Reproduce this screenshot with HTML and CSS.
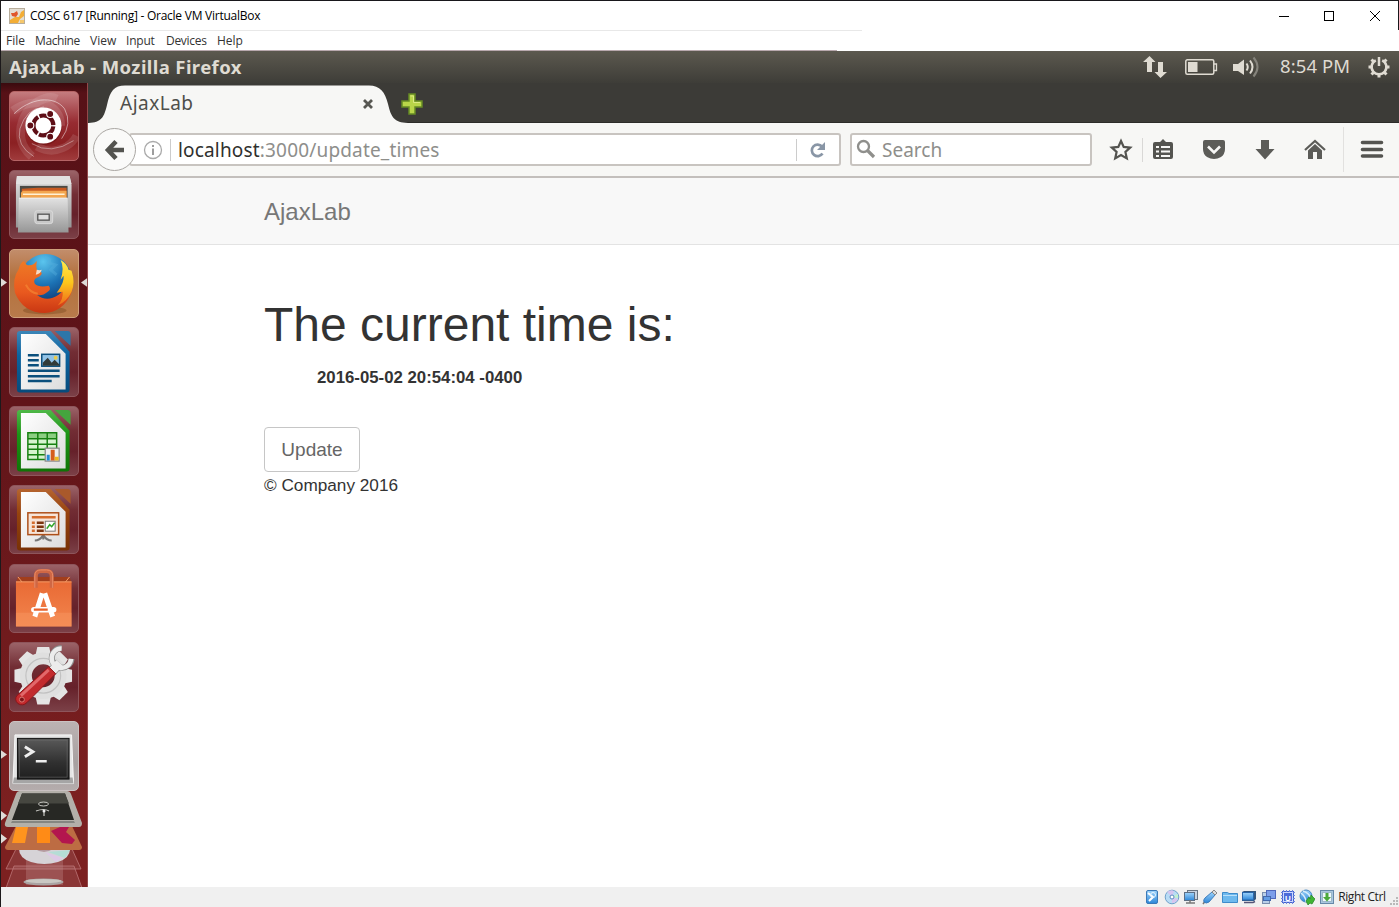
FILE: index.html
```html
<!DOCTYPE html>
<html lang="en">
<head>
<meta charset="utf-8">
<title>AjaxLab</title>
<link rel="stylesheet" href="styles.css">
</head>
<body>
<svg class="defs" width="0" height="0">
  <defs>
    <linearGradient id="doc" x1="0" y1="0" x2="1" y2="1"><stop offset="0" stop-color="#fff"/><stop offset="1" stop-color="#dcdcdc"/></linearGradient>
    <linearGradient id="metal" x1="0" y1="0" x2="0" y2="1"><stop offset="0" stop-color="#e2e2e2"/><stop offset="1" stop-color="#969696"/></linearGradient>
    <linearGradient id="orange" x1="0" y1="0" x2="0" y2="1"><stop offset="0" stop-color="#e96a35"/><stop offset="1" stop-color="#f2854d"/></linearGradient>
    <linearGradient id="dark" x1="0" y1="0" x2="0" y2="1"><stop offset="0" stop-color="#5a5a5a"/><stop offset=".6" stop-color="#303030"/><stop offset="1" stop-color="#1f1f1f"/></linearGradient>
    <linearGradient id="fox" x1="0" y1="0" x2="0" y2="1"><stop offset="0" stop-color="#ee7a25"/><stop offset=".6" stop-color="#e9591f"/><stop offset="1" stop-color="#c93713"/></linearGradient>
    <linearGradient id="flame" x1="0" y1="0" x2="0" y2="1"><stop offset="0" stop-color="#ffe94a"/><stop offset=".5" stop-color="#fcc51c"/><stop offset="1" stop-color="#ee6a1c"/></linearGradient>
    <radialGradient id="globe" cx=".45" cy=".15" r=".9"><stop offset="0" stop-color="#5bc5ee"/><stop offset=".5" stop-color="#1c72b4"/><stop offset="1" stop-color="#0b2c66"/></radialGradient>
    <linearGradient id="blue" x1="0" y1="0" x2="0" y2="1"><stop offset="0" stop-color="#9fd4fb"/><stop offset="1" stop-color="#2c86d8"/></linearGradient>
    <linearGradient id="wblue" x1="0" y1="0" x2="0" y2="1"><stop offset="0" stop-color="#3c86b8"/><stop offset=".4" stop-color="#0b639f"/><stop offset="1" stop-color="#064b7c"/></linearGradient>
    <linearGradient id="cgreen" x1="0" y1="0" x2="0" y2="1"><stop offset="0" stop-color="#4fb848"/><stop offset=".4" stop-color="#1c9416"/><stop offset="1" stop-color="#0f7406"/></linearGradient>
    <linearGradient id="ibrown" x1="0" y1="0" x2="0" y2="1"><stop offset="0" stop-color="#b5642f"/><stop offset=".4" stop-color="#96430e"/><stop offset="1" stop-color="#783106"/></linearGradient>
  </defs>
</svg>
<div class="window">
  <header class="titlebar">
    <svg class="vb-icon" width="16" height="16" viewBox="0 0 16 16"><rect x=".5" y=".5" width="15" height="15" fill="#e3ded4" stroke="#b8ad9b"/><path d="M1 15V12L6 9L10 9L12 4L15 2V8L11 11L9 15Z" fill="#f3ad35"/><path d="M2 5 L5 5 L8 3 L9 6 L7 9 L3 8Z" fill="#e0562b"/><path d="M11 12h4v3h-4z" fill="#f5c76b"/></svg>
    <span class="win-title">COSC 617 [Running] - Oracle VM VirtualBox</span>
    <svg class="win-controls" width="104" height="12" viewBox="0 0 104 12" fill="none" stroke="#000" stroke-width="1"><path d="M1 6.500h10"/><rect x="46.500" y="1.500" width="9" height="9"/><path d="M92 1l10 10M102 1L92 11"/></svg>
  </header>
  <nav class="menubar"><span class="m1">File</span><span class="m2">Machine</span><span class="m3">View</span><span class="m4">Input</span><span class="m5">Devices</span><span class="m6">Help</span></nav>

  <div class="panel">
    <span class="panel-title">AjaxLab - Mozilla Firefox</span>
    <div class="indicators">
      <svg width="24" height="24" viewBox="0 0 24 24" fill="#dfdbd2"><path d="M6.500 1l6 6H9v10H4V7H0z"/><path d="M17.500 23l-6-6H15V7h5v10h4z"/></svg>
      <svg class="battery" width="34" height="20" viewBox="0 0 34 20"><rect x="1.800" y="2.800" width="28" height="14.500" rx="1.500" fill="none" stroke="#dfdbd2" stroke-width="1.500"/><rect x="4" y="5" width="9.500" height="10" fill="#dfdbd2"/><path d="M30 7h2.500v6.500H30" fill="none" stroke="#dfdbd2" stroke-width="1.300"/></svg>
      <svg class="sound" width="28" height="24" viewBox="0 0 28 24" fill="none" stroke="#dfdbd2" stroke-width="2"><path d="M1 9h5l6-4.500v15.500L6 16H1z" fill="#dfdbd2" stroke="none"/><path d="M14.500 8.500q2.500 3.500 0 7"/><path d="M18 5.500q5 6.500 0 13"/><path d="M21.500 2.500q8 9.500 0 19" stroke="#85837b"/></svg>
      <span class="clock">8:54 PM</span>
      <svg width="24" height="24" viewBox="0 0 24 24" fill="none" stroke="#dfdbd2"><path d="M8.800 5.300a7.400 7.400 0 1 0 6.400 0" stroke-width="2.500"/><path d="M12 2v9" stroke-width="2.500"/><path d="M1.500 12H5M19 12h3.500M4.500 4.500l2.700 2.700M19.500 4.500l-2.700 2.700M4.500 19.500l2.700-2.700M19.500 19.500l-2.700-2.700M12 19v3.500" stroke-width="3"/></svg>
    </div>
  </div>

  <div class="desktop">
    <aside class="launcher">
      <div class="item"><i></i><div class="tile dash"><svg viewBox="0 0 70 70"><g fill="none" stroke="#fff"><path d="M4 20C25 5 52 12 52 35" stroke-width="9" opacity=".12"/><path d="M5 23C20 8 45 3 56 18Q64 33 53 48" stroke-width="1" opacity=".5"/><path d="M48 8C34 1 8 21 12 48Q14 58 23 66" stroke-width="9" opacity=".11"/><path d="M25 66Q7 55 11 38Q17 18 35 16" opacity=".4"/><path d="M28 56C48 67 64 53 68 45" stroke-width="8" opacity=".12"/><path d="M23 53Q42 65 65 50" opacity=".4"/></g><circle cx="35" cy="36" r="18.500" fill="#400" opacity=".25"/><circle cx="34.700" cy="34.700" r="18.200" fill="#fff"/><circle cx="34.700" cy="34.700" r="10" fill="none" stroke="#5e0e16" stroke-width="4.200" stroke-dasharray="19.300 1.600" stroke-dashoffset="-1"/><g fill="#5e0e16" stroke="#fff" stroke-width="1.100"><circle cx="21.500" cy="34.700" r="3.500"/><circle cx="41.500" cy="23.200" r="3.500"/><circle cx="41.500" cy="46" r="3.500"/></g></svg></div><i></i></div>
      <div class="item"><i></i><div class="tile"><svg viewBox="0 0 70 70"><path d="M8 6h53l2 9v43H7V15z" fill="url(#metal)"/><path d="M8 6h53l2 8H7z" fill="#e2e2e2"/><rect x="11" y="16" width="48" height="13" fill="#4b4b46"/><path d="M13 19l16-1h29v13H12z" fill="#c85a21"/><path d="M12 23l2-2h44v10H12z" fill="#f3a64f"/><path d="M14 24.500h42" stroke="#fff1d5" stroke-width="1.500"/><path d="M10 28h49l1 35H9z" fill="url(#metal)"/><path d="M10 28.500h49" stroke="#ededed"/><rect x="26" y="41" width="18" height="13" rx="2.500" fill="#c8c8c8" stroke="#dadada"/><rect x="29" y="44.500" width="11.500" height="6" fill="#dedede" stroke="#515151" stroke-width="1.300"/></svg></div><i></i></div>
      <div class="item"><svg class="arrow" viewBox="0 0 7 12"><path d="M0 1l7 5-7 5z"/></svg><div class="tile active"><svg viewBox="0 0 70 70"><ellipse cx="36" cy="62" rx="22" ry="4" fill="#64350e" opacity=".3"/><circle cx="37" cy="31" r="26" fill="url(#globe)"/><path d="M36 8q7 2 4 6l7 2-5 5 6 5" fill="none" stroke="#5ab2df" stroke-width="3" opacity=".35"/><path d="M10 20Q11 14 15 12L18 16Q22 17 25 15L28 12Q27 17 28 21L33 24Q33 27 28 29Q24 31 26 35Q30 39 40 37Q43 41 39 43Q33 48 28 46Q38 54 50 46Q60 39 57 20Q68 32 62 46Q54 63 36 64.500Q14 64 6 44Q3 30 10 20Z" fill="url(#fox)"/><path d="M52 11Q59 15 60 21L63 22Q67 34 63 43Q59 52 49 57Q55 50 54 43L48 44Q56 34 55 27L52 31Q56 19 52 11Z" fill="url(#flame)"/><path d="M28 21q3 1 5 0-1 4-6 5z" fill="#f6dac3"/><path d="M17 36q4 8 12 9" fill="none" stroke="#f68c36" stroke-width="2" opacity=".6"/></svg></div><svg class="arrow right" viewBox="0 0 7 12"><path d="M7 1L0 6l7 5z"/></svg></div>
      <div class="item"><i></i><div class="tile"><svg viewBox="0 0 70 70"><path d="M11 4h31l19 21v38q0 3-3 3H11q-3 0-3-3V7q0-3 3-3z" fill="url(#wblue)"/><path d="M46 4h13q3 0 3 3v12z" fill="#2e76a9"/><path d="M12 7h25l20 20v36H12z" fill="url(#doc)"/><path d="M19 28.500h11M19 33.500h11M19 38.500h11M19 44h32M19 49.500h32M19 54.500h24" stroke="#0b4f7c" stroke-width="2.500"/><rect x="33" y="27.500" width="18" height="12" fill="#91c3e6" stroke="#0b4f7c" stroke-width="1.500"/><circle cx="47" cy="31" r="2" fill="#e7cb4d"/><path d="M34 39v-3l5-5 4 5 3-3 5 5v1z" fill="#323b39"/></svg></div><i></i></div>
      <div class="item"><i></i><div class="tile"><svg viewBox="0 0 70 70"><path d="M11 4h31l19 21v38q0 3-3 3H11q-3 0-3-3V7q0-3 3-3z" fill="url(#cgreen)"/><path d="M46 4h13q3 0 3 3v12z" fill="#45a53e"/><path d="M12 7h25l20 20v36H12z" fill="url(#doc)"/><path d="M19 27h29v27H19z" fill="#d6f4cf"/><path d="M19 27h29v6H19z" fill="#8cce82"/><path d="M19 27h29v27H19zM29 27v27M38.500 27v27M19 33h29M19 38.500h29M19 43.500h29M19 49h29" fill="none" stroke="#178011" stroke-width="1.500"/><rect x="36.500" y="42.500" width="14" height="13" fill="#eee" stroke="#8d8d8d" stroke-width="1.300"/><path d="M38 49h3v6h-3z" fill="#258bd3"/><path d="M42 44h4v11h-4z" fill="#d55d1c"/><path d="M46 51h4v4h-4z" fill="#edb91f"/></svg></div><i></i></div>
      <div class="item"><i></i><div class="tile"><svg viewBox="0 0 70 70"><path d="M11 4h31l19 21v38q0 3-3 3H11q-3 0-3-3V7q0-3 3-3z" fill="url(#ibrown)"/><path d="M46 4h13q3 0 3 3v12z" fill="#a9592b"/><path d="M12 7h25l20 20v36H12z" fill="url(#doc)"/><path d="M34 51q-3 5-8 5M35 51q3 5 8 5M34.500 50v5" fill="none" stroke="#777" stroke-width="2"/><rect x="19" y="28" width="31" height="22" fill="#f7e5d9" stroke="#ad4f19" stroke-width="1.500"/><path d="M23 32.500h24" stroke="#d46c2c" stroke-width="2.500"/><path d="M23 38h3M23 42h3M23 46h3" stroke="#d46c2c" stroke-width="2.500"/><path d="M28 38h7M28 42h7M28 46h7" stroke="#7b3510" stroke-width="2.500"/><rect x="36.500" y="36.500" width="10" height="10" fill="#fff" stroke="#777"/><path d="M38 44l3-4 2 2 3-4" fill="none" stroke="#32a629" stroke-width="1.500"/></svg></div><i></i></div>
      <div class="item"><i></i><div class="tile"><svg viewBox="0 0 70 70"><path d="M9 13h52l2 6H7z" fill="#a23e1c"/><path d="M7 18h56v45H7z" fill="url(#orange)"/><path d="M7 49h56v14H7z" fill="#f79560" opacity=".5"/><path d="M9 13l4 5M61 13l-4 5M7 18h56" stroke="#f69d68" fill="none"/><path d="M27 24V12q0-5 5-5h6q5 0 5 5v12" fill="none" stroke="#cf6744" stroke-width="4"/><path d="M26 24V12q0-6 6-6h6q6 0 6 6v12" fill="none" stroke="#e98c67" stroke-width="1"/><g stroke="#fff" fill="none"><path d="M33.500 29.500L26 53M36 29.500L44 53" stroke-width="5"/><path d="M25 46h20" stroke-width="5.500" stroke-linecap="round"/><path d="M25 46h14" stroke="#e9622b" stroke-width="2.300"/></g></svg></div><i></i></div>
      <div class="item"><i></i><div class="tile"><svg viewBox="0 0 70 70"><g transform="translate(34.500 34)"><g fill="#e4e4e4"><path id="tooth" d="M-6-29H6L8-20H-8z"/><use href="#tooth" transform="rotate(45)"/><use href="#tooth" transform="rotate(90)"/><use href="#tooth" transform="rotate(135)"/><use href="#tooth" transform="rotate(180)"/><use href="#tooth" transform="rotate(225)"/><use href="#tooth" transform="rotate(270)"/><use href="#tooth" transform="rotate(315)"/></g><circle r="17.500" fill="none" stroke="#dfdfdf" stroke-width="12"/><circle r="17.500" fill="none" stroke="#c2c2c2" stroke-width="1.200"/></g><path d="M43 30l8-9" stroke="#8d8d8d" stroke-width="10"/><path d="M53 6A10 10 0 1 0 63 17" fill="none" stroke="#8d8d8d" stroke-width="6"/><path d="M43 30l8-9" stroke="#ececec" stroke-width="8.500"/><path d="M53 6.500A9.800 9.800 0 1 0 62.500 17" fill="none" stroke="#ececec" stroke-width="4.600"/><path d="M40 25L8 54q-3 4 1 8 5 3 9-1l29-29z" fill="#c22a2d" stroke="#8d1519"/><path d="M40 28L12 54" stroke="#e1686a" stroke-width="3"/><circle cx="13" cy="58" r="2.500" fill="#7e1519" stroke="#da7770"/></svg></div><i></i></div>
      <div class="item"><svg class="arrow" viewBox="0 0 7 12"><path d="M0 1l7 5-7 5z"/></svg><div class="tile term"><svg viewBox="0 0 70 70"><path d="M6 14h57l2 49H4z" fill="#e5e5e5" stroke="#f7f7f7"/><path d="M5 57h59l1 6H4z" fill="#a5a5a5"/><rect x="8.500" y="17.500" width="52" height="41" fill="url(#dark)" stroke="#111"/><rect x="10.500" y="19.500" width="48" height="37" fill="none" stroke="#666" stroke-width=".6"/><path d="M16 26l8 5-8 5" fill="none" stroke="#eee" stroke-width="3"/><path d="M27 40.500h11" stroke="#eee" stroke-width="2.600"/></svg></div><i></i></div>
      <svg class="stack" viewBox="0 791 87 96">
        <g fill="#cf9999" fill-opacity=".18" stroke="#bd7779" stroke-width=".8"><path d="M15 849h56l9 20H5z"/><path d="M13 866h60l8 22H5z"/></g>
        <path d="M25 851h37v34H25z" fill="#bd8888" opacity=".35"/>
        <path d="M18 849h51q0 9-12 13-14 4-27 0-12-4-12-13z" fill="#d6d3d7"/><path d="M47 852l17 6 5-8z" fill="#b4ddd6"/><path d="M44 852l11 10 7-4z" fill="#ddc9e6"/><path d="M34 849q9 6 18 0" fill="#b59ba0"/>
        <ellipse cx="42.500" cy="882" rx="20" ry="3.500" fill="#aaa4a3"/><ellipse cx="42.500" cy="881" rx="18" ry="2" fill="#cac8c3"/>
        <path d="M15 826h56l10 21q0 3-3 3H7q-3 0-3-3z" fill="#bd6c43"/><path d="M15 827h12l-3 16H11z" fill="#ff941e"/><path d="M36 827h13v16H36z" fill="#ff8b16"/><path d="M50 831l9-4 9 0-3 5 9 8-3 4-10-1z" fill="#b3164e"/>
        <path d="M19 791h47q3 0 4 3l11 29q0 4-3 4H7q-4 0-3-4l11-29q1-3 4-3z" fill="#b3b0a9"/><path d="M21 793.500h43l9 26.500H11z" fill="#272824"/><path d="M21 793.500h43l4 10H17z" fill="#464740"/><path d="M11 821h62l1 2H10z" fill="#858681"/>
        <g fill="none" stroke="#c8c8c3"><ellipse cx="42.500" cy="804" rx="5" ry="2"/><path d="M35 811q8-3 13 0M43 811v5" stroke-width="1.200"/></g><circle cx="43" cy="811" r="1.500" fill="#eee"/>
        <path d="M0 811l6 4.500-6 5zM0 834l6 4.500-6 5z" fill="#dfdbd7"/>
      </svg>
    </aside>

    <main class="browser">
      <div class="tabstrip">
        <div class="tab">
          <svg class="tab-shape" width="320" height="40" viewBox="0 0 320 40"><path d="M0 40C14 39.500 16 34 19 22C22 8 26 2.500 37 2.500H281C292 2.500 297 9 300 21C303 34 306 39.500 320 40Z" fill="#f7f7f5"/></svg>
          <span class="tab-title">AjaxLab</span>
          <svg class="tab-close" width="12" height="12" viewBox="0 0 12 12"><path d="M2 2l8 8M10 2l-8 8" stroke="#575752" stroke-width="2.800"/></svg>
        </div>
        <svg class="newtab" width="22" height="22" viewBox="0 0 22 22"><path d="M8 1h6v7h7v6h-7v7H8v-7H1V8h7z" fill="#b9d549" stroke="#668a25" stroke-width="1.500"/><path d="M9.500 3h3v6.500H19" fill="none" stroke="#dcea82"/></svg>
      </div>
      <div class="navbar">
        <div class="back"><svg width="24" height="24" viewBox="0 0 24 24"><path d="M13 3.500L5 12l8 8.500M6 12h15" fill="none" stroke="#545450" stroke-width="4.600"/></svg></div>
        <div class="urlbar">
          <svg class="info" width="20" height="20" viewBox="0 0 20 20"><circle cx="10" cy="10" r="8.500" fill="none" stroke="#aaa" stroke-width="1.300"/><path d="M10 8.500V15M10 5v2" stroke="#999" stroke-width="1.900"/></svg>
          <b class="vline"></b><span class="url"><em>localhost</em>:3000/update_times</span><b class="vline end"></b>
          <svg class="reload" width="20" height="20" viewBox="0 0 20 20"><path d="M14.500 13.500A5.800 5.800 0 1 1 14 6.500" fill="none" stroke="#8996a6" stroke-width="2.700"/><path d="M17 2v8H9z" fill="#8996a6"/></svg>
        </div>
        <div class="search"><svg width="20" height="20" viewBox="0 0 20 20" fill="none" stroke="#8f8f8c"><circle cx="7.500" cy="7.500" r="5.500" stroke-width="2.300"/><path d="M11.500 11.500l6.500 6.500" stroke-width="3.200"/></svg><span>Search</span></div>
        <svg class="star" width="24" height="24" viewBox="0 0 24 24"><path d="M12 3l2.700 5.900 6.500.7-4.800 4.300 1.400 6.500-5.800-3.300-5.800 3.300 1.400-6.500-4.800-4.300 6.500-.7z" fill="none" stroke="#545450" stroke-width="2.200"/></svg>
        <b class="sep short"></b>
        <svg class="list" width="24" height="24" viewBox="0 0 24 24"><path d="M4 4h5l3-3 3 3h5q2 0 2 2v13q0 2-2 2H4q-2 0-2-2V6q0-2 2-2z" fill="#545450"/><path d="M5 9h3M10 9h9M5 13.500h3M10 13.500h9M5 18h3M10 18h9" stroke="#f7f7f5" stroke-width="2"/></svg>
        <svg class="wide" width="24" height="24" viewBox="0 0 24 24"><path d="M3 2h18q2 0 2 2v7q0 5-4 8-7 4-14 0-4-3-4-8V4q0-2 2-2z" fill="#5c5c58"/><path d="M6 8.500l6 6 6-6" fill="none" stroke="#f7f7f5" stroke-width="2.600"/></svg>
        <svg class="wide" width="24" height="24" viewBox="0 0 24 24"><path d="M8 2h8v9h5.500L12 21.500 2.500 11H8z" fill="#5c5c58"/></svg>
        <svg class="home" width="24" height="24" viewBox="0 0 24 24"><path d="M2 12L12 3l10 9" fill="none" stroke="#5c5c58" stroke-width="2.200"/><path d="M5 12.500L12 6l7 6.500V21h-5v-7h-4v7H5z" fill="#5c5c58"/></svg>
        <b class="sep tall"></b>
        <svg class="burger" width="24" height="24" viewBox="0 0 24 24"><path d="M2.500 4.500h19M2.500 11.500h19M2.500 18h19" stroke="#545450" stroke-width="3.600" stroke-linecap="round"/></svg>
      </div>
      <div class="page">
        <div class="site-nav"><span class="brand">AjaxLab</span></div>
        <div class="content">
          <h1>The current time is:</h1>
          <p class="time">2016-05-02 20:54:04 -0400</p>
          <button class="update">Update</button>
          <footer>© Company 2016</footer>
        </div>
      </div>
    </main>
  </div>

  <footer class="statusbar">
    <svg viewBox="0 0 16 16"><rect x="2.500" y="1.500" width="11" height="13" rx="1.500" fill="url(#blue)" stroke="#3a79b8"/><path d="M4 4l5 4-4 4" fill="none" stroke="#fff" stroke-width="2"/><circle cx="9" cy="6" r="2.500" fill="none" stroke="#e8f5ff"/></svg>
    <svg viewBox="0 0 16 16"><circle cx="8" cy="8" r="6.800" fill="#b9dcf5" stroke="#6fa1cc"/><path d="M8 8L3 3q4-3 7-1zM8 8l6 2q-2 4-6 4z" fill="#d6c5ef"/><path d="M8 8l6-3v4z" fill="#c1f2cb"/><circle cx="8" cy="8" r="2" fill="#fff" stroke="#5b8ac0"/></svg>
    <svg viewBox="0 0 16 16"><rect x="4.500" y="1.500" width="10" height="9" fill="#c9d4e2" stroke="#687482"/><rect x="1.500" y="3.500" width="10" height="8" fill="url(#blue)" stroke="#5c6e85"/><path d="M3 14h9M7 11v3" stroke="#777" stroke-width="1.500"/></svg>
    <svg viewBox="0 0 16 16"><path d="M1 15l3-4" stroke="#777" stroke-width="1.500"/><path d="M3 9l7-6 3 3-6 7q-3 2-5 0-1-2 1-4z" fill="url(#blue)" stroke="#3d7dbd"/><path d="M10 3l2-2 3 3-2 2z" fill="#ddd" stroke="#888"/></svg>
    <svg viewBox="0 0 16 16"><path d="M.5 13.500v-10h5l1.500 1h8.500v9z" fill="#6db9ee" stroke="#3d8bcb"/><path d="M1 6.500h14" stroke="#b9e0fa"/></svg>
    <svg viewBox="0 0 16 16"><path d="M1 3l2-1h12v8l-2 2H1z" fill="#34587e"/><rect x="1.500" y="3.500" width="11" height="7.500" fill="url(#blue)" stroke="#2866ab"/><path d="M3 13.500h9l2-1" stroke="#557" stroke-width="1.500" fill="none"/></svg>
    <svg viewBox="0 0 16 16"><rect x="1.500" y="3.500" width="7" height="11" fill="#b9cfe8" stroke="#7a8dae"/><rect x="5.500" y="1.500" width="9" height="8" fill="#7c9eea" stroke="#5068bc"/><rect x="2.500" y="7.500" width="7" height="4" fill="#639be4" stroke="#4268ac"/></svg>
    <svg viewBox="0 0 16 16"><rect x="2" y="2" width="12" height="12" fill="#4261cd"/><path d="M1 3.500h14M1 6.500h14M1 9.500h14M1 12.500h14M3.500 1v14M6.500 1v14M9.500 1v14M12.500 1v14" stroke="#6d86df" stroke-width="1"/><rect x="3.500" y="3.500" width="9" height="9" fill="#4c6cd9" stroke="#cdd8ff"/><text x="8" y="11.500" text-anchor="middle" class="chip">U</text></svg>
    <svg viewBox="0 0 16 16"><circle cx="7" cy="7" r="6" fill="url(#blue)" stroke="#4989c2"/><path d="M2 4q5 4 5 9M4 2q6 2 8 7" stroke="#d9edfa" fill="none" stroke-width="1.500"/><path d="M7 12l3-4 1 2 1-4 4 4-3 5-2-1-2 2z" fill="#40b433" stroke="#238322" stroke-width=".7"/></svg>
    <svg viewBox="0 0 16 16"><rect x="1.500" y="1.500" width="13" height="13" fill="#a9c6df" stroke="#6688a8"/><rect x="3.500" y="3.500" width="9" height="9" fill="#eff7fb" stroke="#9cb8c9"/><path d="M6.500 4h3v4H12l-4 4.500L4 8h2.500z" fill="#4ca93c"/></svg>
    <span class="host-key">Right Ctrl</span>
    <svg class="grip" viewBox="0 0 8 8" fill="#b9b9b9"><path d="M6 0h2v2H6zM3 3h2v2H3zM6 3h2v2H6zM0 6h2v2H0zM3 6h2v2H3zM6 6h2v2H6z"/></svg>
  </footer>
</div>
</body>
</html>
```
FILE: styles.css
```css
* { box-sizing: border-box; }
body { margin: 0; overflow: hidden; background: #fff; font-family: "Noto Sans", sans-serif; }
.defs { position: absolute; }
svg { display: block; flex: none; }
span { white-space: nowrap; }
.window { width: 1399px; height: 907px; display: flex; flex-direction: column; border-left: 1px solid #1c191b; }

.titlebar { height: 30px; flex: none; display: flex; align-items: center; border-top: 1px solid #18171b; border-right: 1px solid #18171b; padding: 0 16px 0 8px; }
.win-title { margin-left: 5px; font: 12px "Open Sans", sans-serif; letter-spacing: -0.25px; color: #000; }
.win-controls { margin-left: auto; }

.menubar { height: 21px; flex: none; display: flex; align-items: center; font: 12px/19px "Open Sans", sans-serif; color: #333; padding-left: 5px; background: linear-gradient(#e8e8e8, #e8e8e8) 0 0 / 861px 1px no-repeat, linear-gradient(#b9a9ae, #b9a9ae) 0 20px / 836px 1px no-repeat, #fff; }
.menubar span { flex: none; }
.menubar .m2 { letter-spacing: -0.4px; }
.m1 { width: 29px; } .m2 { width: 55px; } .m3 { width: 36px; } .m4 { width: 40px; letter-spacing: -0.2px; } .m5 { width: 51px; letter-spacing: -0.3px; }

.panel { height: 32px; flex: none; display: flex; align-items: center; justify-content: space-between; padding: 0 8px; background: linear-gradient(#5c594f, #3e3d38); color: #dfdbd2; }
.panel-title { font-size: 18.5px; font-weight: 700; letter-spacing: 0.4px; margin-top: -2px; }
.indicators { display: flex; align-items: center; }
.battery { margin-left: 17px; }
.sound { margin-left: 14px; }
.clock { width: 70px; margin: -3px 17px 0 20px; font-size: 18.5px; letter-spacing: 0.1px; }

.desktop { flex: 1; display: flex; min-height: 0; }
.launcher { width: 87px; flex: none; display: flex; flex-direction: column; gap: 9.25px; padding-top: 8px; background: linear-gradient(#3a0b0e, #571117 10px, #601419 40%, #7c2020 90%); border-right: 1px solid #93494a; }
.item { height: 69.5px; flex: none; display: grid; grid-template-columns: 8px 69.5px 8.5px; align-items: center; }
.tile { width: 69.5px; height: 69.5px; border-radius: 5px; border: 1px solid #8e555b; background: linear-gradient(#9b6368, #722d34 35%, #66212a 65%, #7b4047); overflow: hidden; }
.tile svg { width: 69.5px; height: 69.5px; margin: -1px; }
.tile.dash { background: linear-gradient(#c47c7f, #972b31 45%, #8b2022 75%, #a03b3c); border-color: #b56465; }
.tile.active { background: linear-gradient(#c28d6b, #b3703c 40%, #b87b4b); border-color: #cfa17c; }
.tile.term { background: linear-gradient(#bcb3b3, #a7a0a0 60%, #b4acac); border-color: #cac2c2; }
.arrow { width: 6px; height: 11px; margin-top: -2px; fill: #dfdbd7; }
.arrow.right { justify-self: end; }
.stack { width: 87px; height: 96px; margin-top: -9px; }

.browser { flex: 1; display: flex; flex-direction: column; min-width: 0; }
.tabstrip { height: 40px; flex: none; display: flex; align-items: center; background: #3c3b37; border-bottom: 1px solid #2d2c29; }
.tab { position: relative; width: 313px; height: 40px; display: flex; align-items: center; padding-left: 32px; }
.tab-shape { position: absolute; left: 0; top: 0; }
.tab-title { position: relative; width: 242px; font-size: 19px; letter-spacing: 0.5px; color: #4f4f4b; }
.tab-close { position: relative; margin-top: 3px; }
.newtab { margin-top: 3px; }
.navbar { height: 55px; flex: none; display: flex; align-items: center; background: #f7f7f5; border-bottom: 2px solid #c3bfbc; padding-left: 5px; }
.back { width: 43px; height: 43px; flex: none; border: 1.5px solid #aaa7a3; border-radius: 50%; background: #fafaf9; display: grid; place-items: center; z-index: 1; }
.urlbar { width: 712px; height: 33px; margin-left: -7px; flex: none; display: flex; align-items: center; background: #fff; border: 2px solid #c8c4c0; border-radius: 3px; padding-left: 12px; }
.vline { width: 1px; height: 22px; background: #ccc; margin: 0 7px; }
.vline.end { margin: 0 11px 0 auto; }
.url { color: #8e8e8b; font-size: 19px; letter-spacing: 0.17px; }
.url em { font-style: normal; color: #30302e; }
.reload { margin-right: 11px; }
.search { width: 242px; height: 33px; margin-left: 9px; flex: none; display: flex; align-items: center; gap: 6px; background: #fff; border: 2px solid #c8c4c0; border-radius: 3px; padding-left: 4px; font-size: 19px; color: #8e8e8b; }
.search svg { margin-top: -2px; }
.star { margin-left: 17px; }
.sep { width: 1px; background: #d9d8d6; }
.sep.short { height: 24px; margin-left: 9px; }
.sep.tall { height: 45px; margin-left: 16px; background: #e2e1df; }
.list { margin-left: 8px; }
.wide { margin-left: 27px; }
.home { margin-left: 26px; }
.burger { margin-left: 16px; }

.page { flex: 1; background: #fff; font-family: "Liberation Sans", Arial, sans-serif; color: #333; }
.site-nav { height: 67px; background: #f8f8f8; border-bottom: 1px solid #e3e3e3; padding: 20px 0 0 176px; }
.brand { display: block; font-size: 24px; line-height: 28px; color: #777; }
.content { padding: 53px 0 0 176px; }
h1 { margin: 0; font-size: 48px; line-height: 53px; font-weight: 400; }
.time { margin: 15px 0 0 53px; font-size: 16.8px; line-height: 24px; font-weight: 700; }
.update { display: block; width: 96px; height: 45px; margin: 37px 0 0; padding: 0; font: 19px "Liberation Sans", Arial, sans-serif; color: #666; background: #fff; border: 1px solid #c6c6c6; border-radius: 4px; }
footer { font-size: 17.2px; line-height: 26px; }

.statusbar { height: 20px; flex: none; display: flex; align-items: center; justify-content: flex-end; gap: 3.4px; background: #f0f0f0; font: 12px/20px "Open Sans", sans-serif; color: #222; }
.statusbar svg { width: 16px; height: 16px; }
.chip { font: bold 8px "Liberation Sans", sans-serif; fill: #fff; }
.host-key { letter-spacing: -0.4px; }
.statusbar .grip { width: 8px; height: 8px; align-self: flex-end; margin: 0 1px 2px 1px; }
```
